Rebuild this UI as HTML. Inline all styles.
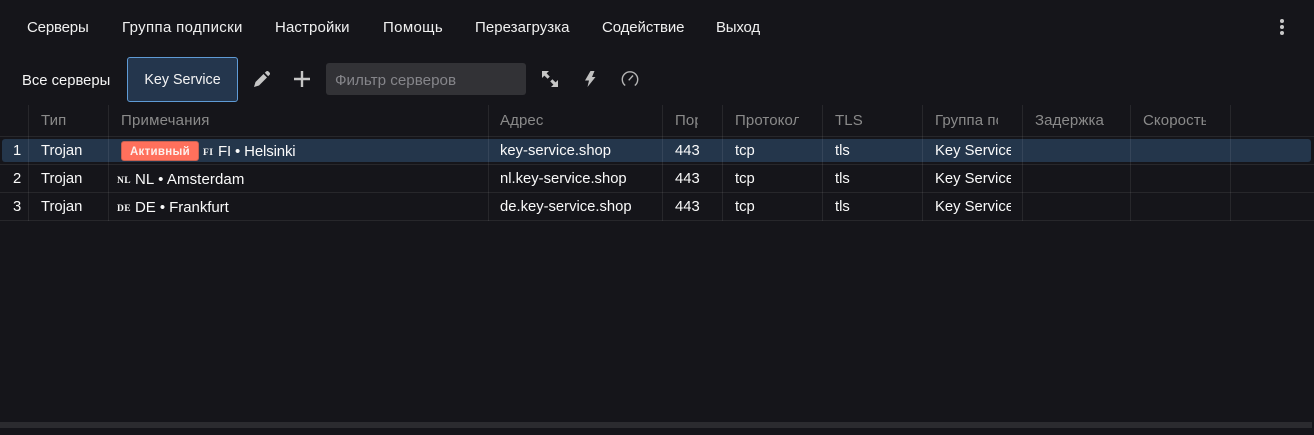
<!DOCTYPE html>
<html lang="ru"><head><meta charset="utf-8"><title>Серверы</title>
<style>
html,body{margin:0;padding:0;width:1314px;height:435px;overflow:hidden;background:#15151a}
body{position:relative;font-family:"Liberation Sans","DejaVu Sans",sans-serif;font-size:14.8px;color:#f2f2f2}
.a{position:absolute;white-space:nowrap;line-height:20px}
.m{top:18px;color:#f0f0f0;font-size:15px}
.h{top:111px;color:#8a8a8a;overflow:hidden;font-size:15px;letter-spacing:.1px}
.l{position:absolute;background:rgba(255,255,255,.08)}
.c{color:#fafafa}
.n{font-size:15px;color:#fafafa}
.f{font-family:"Liberation Serif",serif;font-size:9.500px;font-weight:bold;letter-spacing:.4px;color:#f5f5f5;margin-top:1px}
</style></head><body>
<span class="a m" style="left:27px;letter-spacing:-.17px">Серверы</span>
<span class="a m" style="left:122px;letter-spacing:.35px">Группа подписки</span>
<span class="a m" style="left:275px;letter-spacing:.12px">Настройки</span>
<span class="a m" style="left:383px;letter-spacing:.35px">Помощь</span>
<span class="a m" style="left:475px;letter-spacing:.05px">Перезагрузка</span>
<span class="a m" style="left:602px;letter-spacing:-.1px">Содействие</span>
<span class="a m" style="left:716px;letter-spacing:-.2px">Выход</span>
<svg class="a" style="left:1279px;top:19px" width="6" height="18"><rect x="1" y="0" width="4" height="4" rx="2" fill="#c8c8c8"/><rect x="1" y="6" width="4" height="4" rx="2" fill="#c8c8c8"/><rect x="1" y="12" width="4" height="4" rx="2" fill="#c8c8c8"/></svg>

<span class="a" style="left:22px;top:71px;color:#f5f5f5">Все серверы</span>
<div class="a" style="left:127px;top:57px;width:109px;height:43px;background:#24364d;border:1px solid #5f9bd6;border-radius:3px;text-align:center;line-height:45px;color:#f5f5f5;font-size:14.300px">Key Service</div>
<svg class="a" style="left:253px;top:70px" width="18" height="18" viewBox="0 0 18 18"><path d="M1 17l1.500-5L10.500 4 14 7.500l-8 8zM11.800 2.800l1.300-1.300c.7-.7 1.700-.7 2.400 0l1 1c.7.7.7 1.700 0 2.400l-1.300 1.300z" fill="#c6c6c6"/></svg>
<svg class="a" style="left:293px;top:70px" width="18" height="18" viewBox="0 0 18 18"><path d="M9 1v16M1 9h16" stroke="#c6c6c6" stroke-width="2.400" fill="none"/></svg>
<div class="a" style="left:326px;top:63px;width:200px;height:32px;background:#323236;border-radius:3px"></div>
<span class="a" style="left:335px;top:71px;color:#85858a;font-size:15.200px">Фильтр серверов</span>
<svg class="a" style="left:541px;top:70px" width="18" height="18" viewBox="0 0 18 18"><path d="M1 1h7L5.600 3.400 8.800 6.600 6.600 8.800 3.400 5.600 1 8zM17 17h-7l2.400-2.400-3.200-3.200 2.200-2.200 3.200 3.200L17 10z" fill="#c6c6c6"/></svg>
<svg class="a" style="left:584px;top:70px" width="12" height="18" viewBox="0 0 12 18"><path d="M6.500 1h4L8 7h3.500L3.500 17 5 10.500H1z" fill="#c0c0c0"/></svg>
<svg class="a" style="left:621px;top:70px" width="18" height="18" viewBox="0 0 18 18"><path d="M4.200 15.500a7.700 7.700 0 1 1 9.600 0M7.700 10.300L12 5.500" stroke="#b5b5b5" stroke-width="1.400" fill="none"/></svg>

<div class="a" style="left:2px;top:139px;width:1309px;height:23px;background:#24364b;border-radius:3px"></div>
<div class="l" style="left:0;top:136px;width:1314px;height:1px"></div>
<div class="l" style="left:0;top:164px;width:1314px;height:1px"></div>
<div class="l" style="left:0;top:192px;width:1314px;height:1px"></div>
<div class="l" style="left:0;top:220px;width:1314px;height:1px"></div>
<div class="l" style="left:28px;top:105px;width:1px;height:116px"></div>
<div class="l" style="left:108px;top:105px;width:1px;height:116px"></div>
<div class="l" style="left:488px;top:105px;width:1px;height:116px"></div>
<div class="l" style="left:662px;top:105px;width:1px;height:116px"></div>
<div class="l" style="left:722px;top:105px;width:1px;height:116px"></div>
<div class="l" style="left:822px;top:105px;width:1px;height:116px"></div>
<div class="l" style="left:922px;top:105px;width:1px;height:116px"></div>
<div class="l" style="left:1022px;top:105px;width:1px;height:116px"></div>
<div class="l" style="left:1130px;top:105px;width:1px;height:116px"></div>
<div class="l" style="left:1230px;top:105px;width:1px;height:116px"></div>

<span class="a h" style="left:41px">Тип</span>
<span class="a h" style="left:121px;letter-spacing:.2px">Примечания</span>
<span class="a h" style="left:500px">Адрес</span>
<span class="a h" style="left:675px;width:23px">Порт</span>
<span class="a h" style="left:735px;width:64px">Протокол</span>
<span class="a h" style="left:835px">TLS</span>
<span class="a h" style="left:935px;width:63px">Группа подписки</span>
<span class="a h" style="left:1035px">Задержка</span>
<span class="a h" style="left:1143px;width:63px">Скорость</span>

<span class="a c" style="left:13px;top:141px">1</span>
<span class="a c" style="left:41px;top:141px">Trojan</span>
<div class="a" style="left:121px;top:141px;width:76px;height:18px;background:#ff705c;border:1px solid #c9604f;border-radius:3px;text-align:center;font-size:11.500px;font-weight:bold;color:#fdf0ec;letter-spacing:.3px;line-height:20px">Активный</div>
<span class="a f" style="left:203px;top:142px">FI</span>
<span class="a n" style="left:218px;top:142px;letter-spacing:-.15px">FI • Helsinki</span>
<span class="a c" style="left:500px;top:141px">key-service.shop</span>
<span class="a c" style="left:675px;top:141px">443</span>
<span class="a c" style="left:735px;top:141px">tcp</span>
<span class="a c" style="left:835px;top:141px">tls</span>
<span class="a c" style="left:935px;top:141px;width:76px;overflow:hidden">Key Service</span>

<span class="a c" style="left:13px;top:169px">2</span>
<span class="a c" style="left:41px;top:169px">Trojan</span>
<span class="a f" style="left:117px;top:170px">NL</span>
<span class="a n" style="left:135px;top:170px;letter-spacing:.1px">NL • Amsterdam</span>
<span class="a c" style="left:500px;top:169px">nl.key-service.shop</span>
<span class="a c" style="left:675px;top:169px">443</span>
<span class="a c" style="left:735px;top:169px">tcp</span>
<span class="a c" style="left:835px;top:169px">tls</span>
<span class="a c" style="left:935px;top:169px;width:76px;overflow:hidden">Key Service</span>

<span class="a c" style="left:13px;top:197px">3</span>
<span class="a c" style="left:41px;top:197px">Trojan</span>
<span class="a f" style="left:117px;top:198px">DE</span>
<span class="a n" style="left:135px;top:198px;letter-spacing:-.05px">DE • Frankfurt</span>
<span class="a c" style="left:500px;top:197px">de.key-service.shop</span>
<span class="a c" style="left:675px;top:197px">443</span>
<span class="a c" style="left:735px;top:197px">tcp</span>
<span class="a c" style="left:835px;top:197px">tls</span>
<span class="a c" style="left:935px;top:197px;width:76px;overflow:hidden">Key Service</span>

<div class="a" style="left:0;top:422px;width:1312px;height:6px;background:#2b2b2f"></div>
</body></html>
